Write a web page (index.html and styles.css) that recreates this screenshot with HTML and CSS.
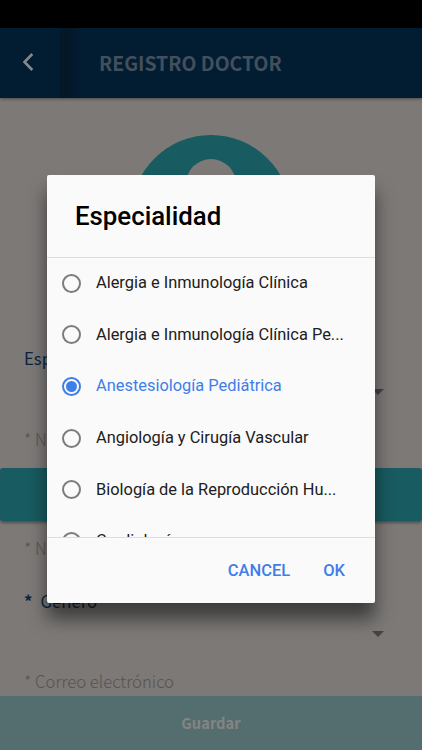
FILE: index.html
```html
<!DOCTYPE html>
<html lang="es">
  <head>
    <meta charset="UTF-8" />
    <meta name="viewport" content="width=device-width, initial-scale=1.0" />
    <title>Registro Doctor</title>
    <link rel="stylesheet" href="styles.css">
  </head>
  <body>
    <div class="page">
      <div class="status-bar"></div>
      <header class="header">
        <button class="back" aria-label="Volver">
          <svg width="12" height="20" viewBox="0 0 12 20">
            <path d="M10.3 2 2.5 10l7.8 8" fill="none" stroke="currentColor" stroke-width="2.6" />
          </svg>
        </button>
        <h1><span>REGISTRO DOCTOR</span></h1>
      </header>
      <main class="content">
        <svg class="avatar" width="160" height="160" viewBox="0 0 160 160">
          <circle class="avatar-bg" cx="80" cy="80" r="80" />
          <circle class="avatar-user" cx="80" cy="49" r="25" />
          <path class="avatar-user" d="M34 123c0-24 20-38 46-38s46 14 46 38z" />
        </svg>
        <div class="field select">
          <label>Especialidad</label>
          <span class="arrow"></span>
        </div>
        <div class="field input">* Nombre</div>
        <div class="band"></div>
        <div class="field input second">* Nombre</div>
        <div class="field select gender">
          <label><b>*</b>Género</label>
          <span class="arrow"></span>
        </div>
        <div class="field input mail">* Correo electrónico</div>
      </main>
      <footer class="save">Guardar</footer>
    </div>

    <div class="overlay">
      <div class="alert" role="dialog">
        <h2>Especialidad</h2>
        <ul class="options">
          <li><i class="radio"></i><span>Alergia e Inmunología Clínica</span></li>
          <li><i class="radio"></i><span>Alergia e Inmunología Clínica Pe...</span></li>
          <li class="checked"><i class="radio"></i><span>Anestesiología Pediátrica</span></li>
          <li><i class="radio"></i><span>Angiología y Cirugía Vascular</span></li>
          <li><i class="radio"></i><span>Biología de la Reproducción Hu...</span></li>
          <li><i class="radio"></i><span>Cardiología</span></li>
        </ul>
        <div class="actions">
          <button>CANCEL</button>
          <button>OK</button>
        </div>
      </div>
    </div>
  </body>
</html>
```
FILE: styles.css
```css
*,
*::before,
*::after {
  box-sizing: border-box;
}
:root {
  --clr-page: #7c7977;
  --clr-navy: #021c32;
  --clr-teal: #185b60;
  --clr-blue: #3f7ee8;
  --ff-page: "Noto Sans CJK SC", "Noto Sans", sans-serif;
  --ff-alert: Roboto, sans-serif;
}
body {
  margin: 0;
  height: 750px;
  overflow: hidden;
  background-color: var(--clr-page);
}
h1,
h2,
ul {
  margin: 0;
  padding: 0;
}
button {
  padding: 0;
  border: 0;
  background: none;
}
.page {
  display: flex;
  flex-direction: column;
  height: 750px;
  font-family: var(--ff-page);
}
.status-bar {
  height: 28px;
  background-color: #000;
}
.header {
  display: flex;
  height: 70px;
  background-color: var(--clr-navy);
  box-shadow: 0 1px 3px rgba(0, 0, 0, 0.4);
}
.back {
  width: 60px;
  padding: 0 5px 3px 0;
  color: #85898c;
}
.back svg {
  display: block;
  margin: auto;
}
.header h1 {
  display: flex;
  flex: 1;
  align-items: center;
  padding-left: 39px;
  background: linear-gradient(90deg, #03182a, #051725 7px, #031a2d 14px, var(--clr-navy) 20px);
  color: #424f5c;
  font-size: 19.4px;
  font-weight: 700;
  line-height: 70px;
}
.content {
  display: flex;
  flex-direction: column;
  flex: 1;
  padding-top: 37px;
}
.avatar {
  align-self: center;
  flex-shrink: 0;
}
.avatar-bg {
  fill: var(--clr-teal);
}
.avatar-user {
  fill: var(--clr-page);
}
.field {
  display: flex;
  padding: 0 38px 0 24px;
  font-size: 16.7px;
  line-height: 26px;
}
.select {
  justify-content: space-between;
  height: 81px;
  margin-top: 50px;
  color: #0b2440;
}
.select b {
  margin-right: 8px;
}
.arrow {
  width: 12px;
  height: 6px;
  margin-top: 44px;
  background-color: #454443;
  clip-path: polygon(0 0, 100% 0, 50% 100%);
}
.input {
  height: 42px;
  color: #565453;
  font-weight: 300;
}
.band {
  height: 53px;
  flex-shrink: 0;
  border-radius: 3px;
  background-color: var(--clr-teal);
  box-shadow: 0 2px 3px rgba(0, 0, 0, 0.35);
}
.second {
  height: 54px;
  padding-top: 14px;
}
.gender {
  height: 80px;
  margin-top: 13px;
}
.gender .arrow {
  margin-top: 43px;
}
.mail {
  height: 28px;
}
.save {
  height: 54px;
  background-color: #546d6e;
  color: #858482;
  font-size: 14.7px;
  font-weight: 700;
  line-height: 54px;
  text-align: center;
}
.overlay {
  position: absolute;
  inset: 0;
  display: flex;
  justify-content: center;
  align-items: flex-start;
  padding-top: 174.5px;
  font-family: var(--ff-alert);
}
.alert {
  width: 328px;
  border-radius: 2px;
  background-color: #fafafa;
  box-shadow: 0 16px 18px rgba(0, 0, 0, 0.5);
}
.alert h2 {
  height: 82px;
  padding: 26px 28px 0;
  color: #000;
  font-size: 25.8px;
  font-weight: 500;
  line-height: 31px;
}
.options {
  height: 281px;
  overflow: hidden;
  border-top: 1px solid #dedede;
  border-bottom: 1px solid #dedede;
  list-style: none;
}
.options li {
  display: flex;
  align-items: center;
  gap: 15px;
  height: 51.6px;
  padding-left: 15px;
  color: #202020;
  font-size: 16.4px;
  white-space: nowrap;
}
.options li span {
  margin-top: -1px;
}
.radio {
  display: grid;
  place-items: center;
  width: 19px;
  height: 19px;
  border: 2px solid #7c7c7c;
  border-radius: 50%;
}
.options .checked {
  color: var(--clr-blue);
}
.checked .radio {
  border-color: var(--clr-blue);
}
.checked .radio::after {
  content: "";
  width: 11px;
  height: 11px;
  border-radius: 50%;
  background-color: var(--clr-blue);
}
.actions {
  display: flex;
  justify-content: flex-end;
  gap: 33px;
  height: 65.5px;
  padding-right: 30px;
}
.actions button {
  color: var(--clr-blue);
  font-family: inherit;
  font-size: 16.5px;
  font-weight: 500;
}
```
